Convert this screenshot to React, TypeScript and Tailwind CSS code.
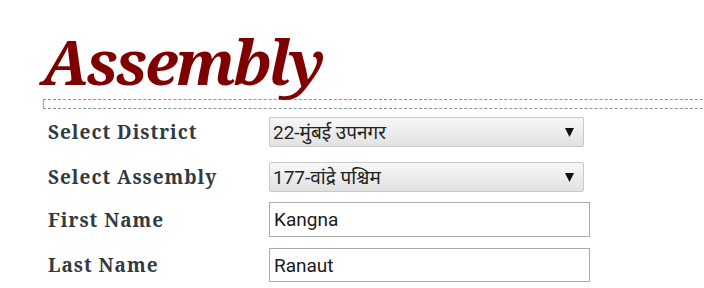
import React from 'react';

const serif = "font-['Noto_Serif','Droid_Serif','DejaVu_Serif',serif]";
const sans = "font-['Roboto','Noto_Sans_Devanagari','Noto_Sans',sans-serif]";

const SelectBox: React.FC<{ value: string }> = ({ value }) => (
    <div className={`flex h-[30px] w-[315px] items-center justify-between rounded-[2px] border border-[#c9c9c9] bg-gradient-to-b from-[#f7f7f7] to-[#e2e2e2] pl-[3px] pr-[9px] text-[19px] leading-none text-[#222] ${sans}`}>
        <span>{value}</span>
        <svg width="9" height="9" viewBox="0 0 9 9">
            <polygon points="0,0 9,0 4.5,9" fill="#111" />
        </svg>
    </div>
);

const TextBox: React.FC<{ value: string; tall?: boolean }> = ({ value, tall }) => (
    <div className={`flex w-[321px] items-center border border-[#ababab] bg-white pl-[4px] text-[19px] leading-none text-[#1a1a1a] ${tall ? 'h-[35px]' : 'h-[34px]'} ${sans}`}>
        {value}
    </div>
);

const Label: React.FC<{ children: React.ReactNode }> = ({ children }) => (
    <div className={`w-[221px] shrink-0 text-[19px] leading-[24px] font-bold tracking-[1px] text-[#2f3b40] ${serif}`}>{children}</div>
);

export default function App() {
    return (
        <div className="h-[288px] w-[704px] overflow-hidden bg-white">
            <h1 className={`ml-[42px] mt-[30px] text-[62px] leading-none font-bold italic tracking-[-2.5px] text-[#7f0000] ${serif}`}>
                Assembly
            </h1>
            <div className="ml-[43px] mt-[7px] h-[10px] w-[700px] border border-dashed border-[#7f9a9e]" />

            <div className="pl-[48px] mt-[8px] flex flex-col">
                <div className="flex items-center">
                    <Label>Select District</Label>
                    <SelectBox value="22-मुंबई उपनगर" />
                </div>
                <div className="mt-[15px] flex items-center">
                    <Label>Select Assembly</Label>
                    <SelectBox value="177-वांद्रे पश्चिम" />
                </div>
                <div className="mt-[10px] flex items-center">
                    <Label>First Name</Label>
                    <TextBox value="Kangna" tall />
                </div>
                <div className="mt-[11px] flex items-center">
                    <Label>Last Name</Label>
                    <TextBox value="Ranaut" />
                </div>
            </div>
        </div>
    );
}
